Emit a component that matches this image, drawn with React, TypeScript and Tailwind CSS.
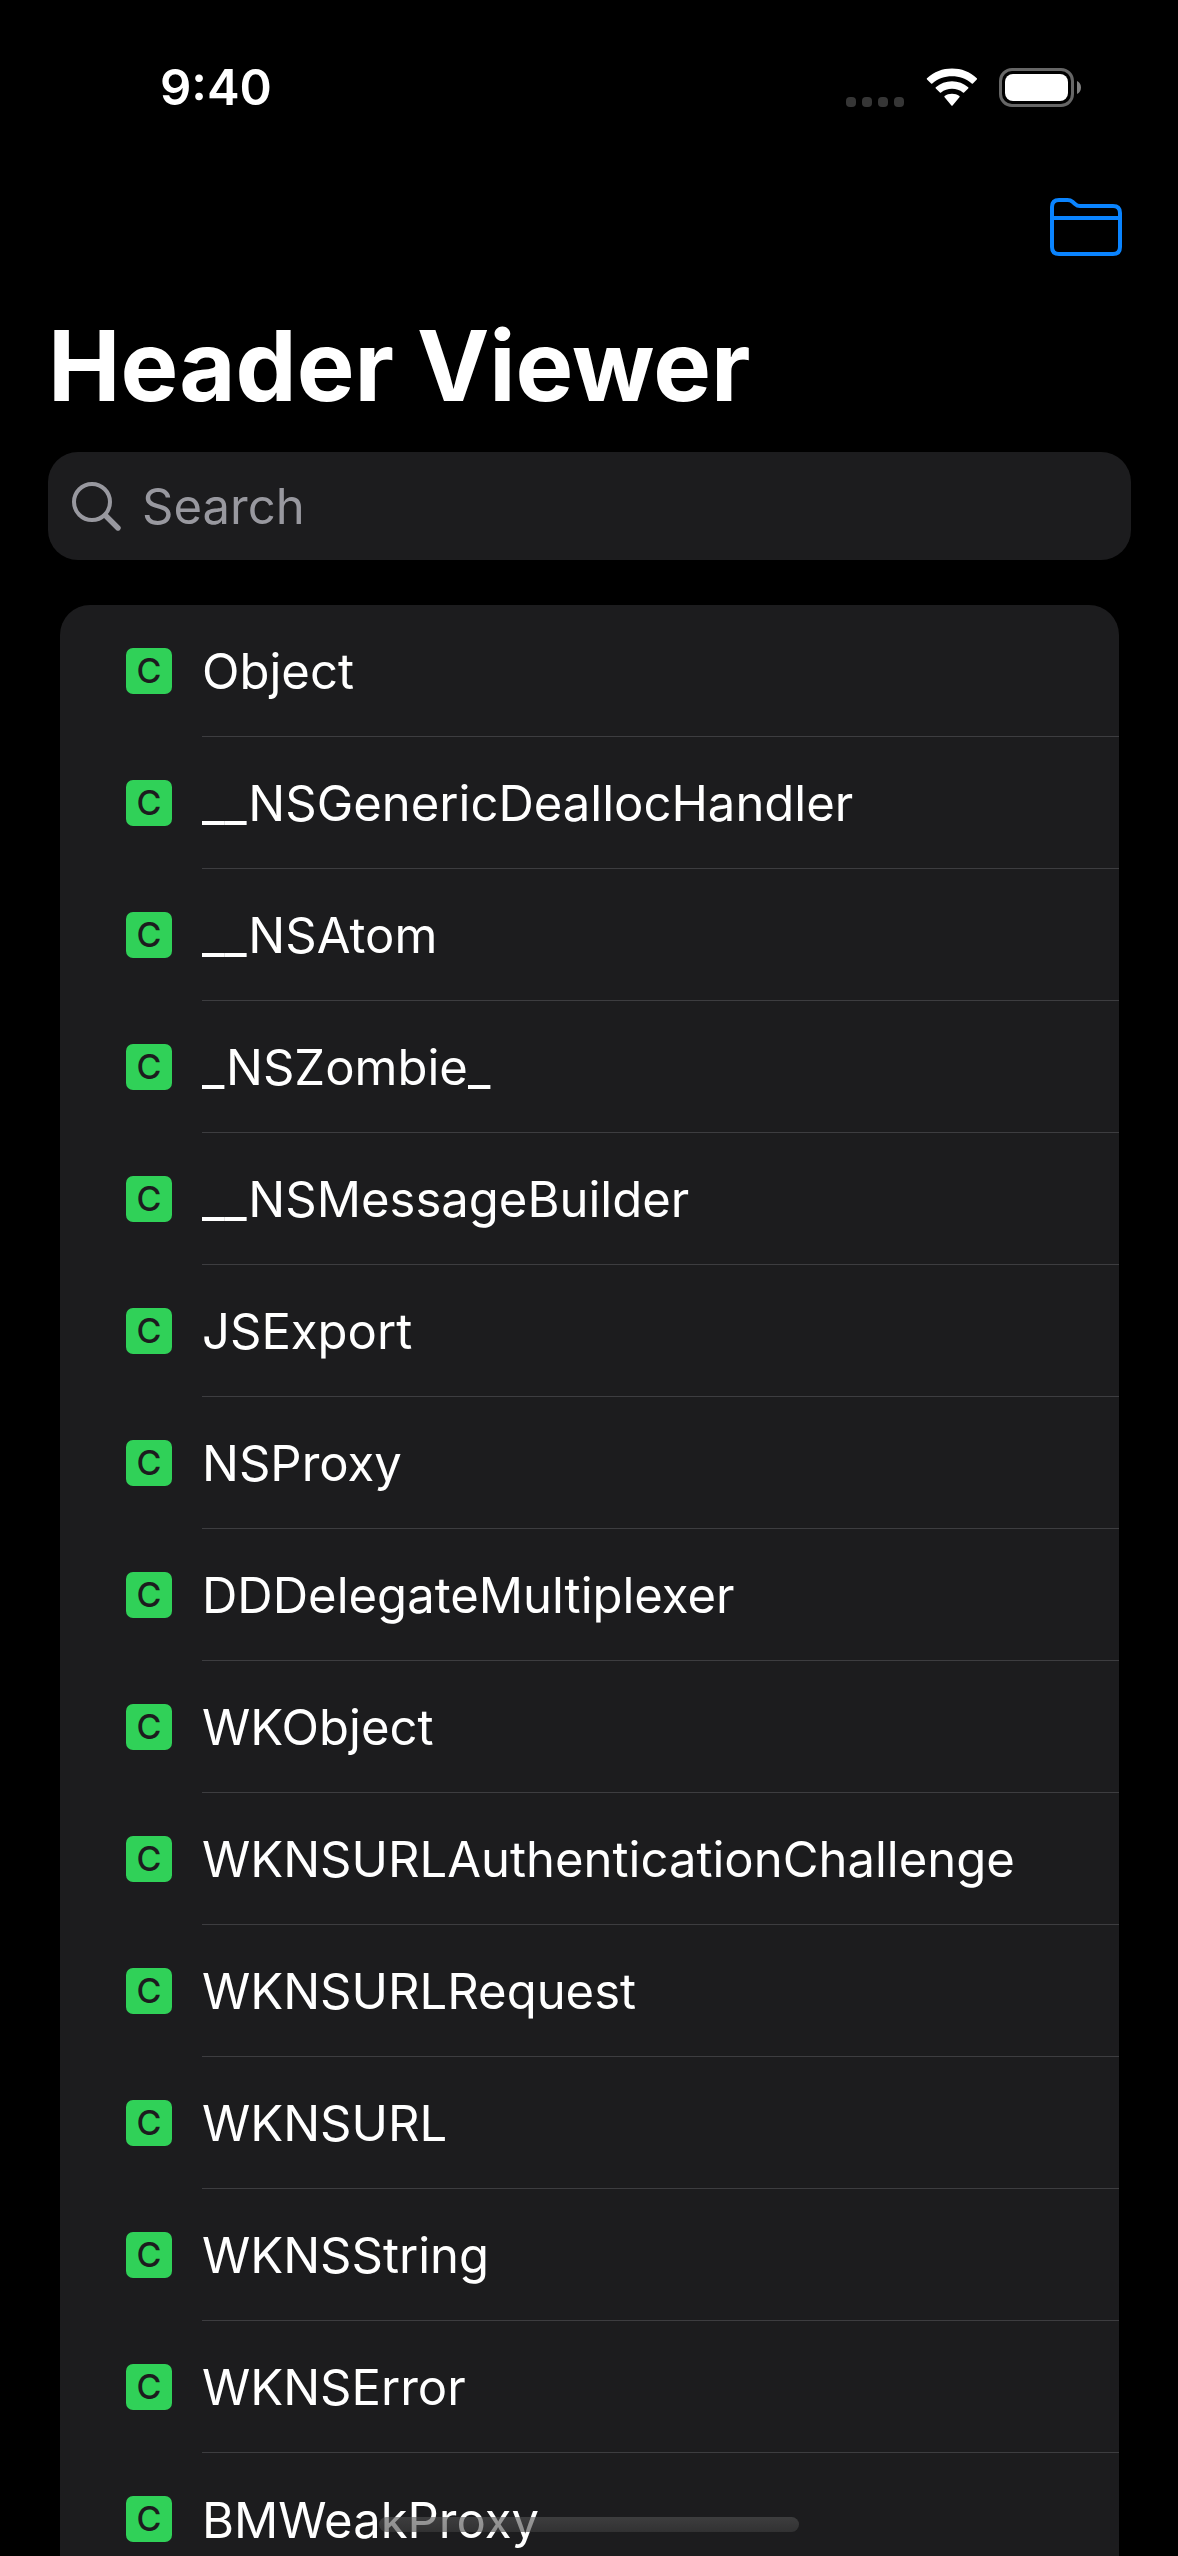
const classes = [
  "Object",
  "__NSGenericDeallocHandler",
  "__NSAtom",
  "_NSZombie_",
  "__NSMessageBuilder",
  "JSExport",
  "NSProxy",
  "DDDelegateMultiplexer",
  "WKObject",
  "WKNSURLAuthenticationChallenge",
  "WKNSURLRequest",
  "WKNSURL",
  "WKNSString",
  "WKNSError",
  "BMWeakProxy",
];

function WifiIcon() {
  return (
    <svg width="52" height="39" viewBox="0 0 52 39" fill="#fff" aria-label="Wi-Fi">
      <path d="M1 11.5Q0.4 10.9 1 10.3C8 3.8 16.6 0.6 26 0.6S44 3.8 50.8 10.3Q51.4 10.9 50.8 11.5L46.9 15.5Q46.3 16 45.7 15.5C40.2 10.6 33.4 8.2 26 8.2S11.8 10.6 6.3 15.5Q5.7 16 5.1 15.5Z" />
      <path d="M9.8 20.4Q9.2 19.8 9.8 19.2C14.4 15.2 19.9 13.2 26 13.2S37.6 15.2 42.2 19.2Q42.8 19.8 42.2 20.4L38.1 24.5Q37.5 25 36.9 24.5C33.8 22 30.2 20.8 26 20.8S18.2 22 15.1 24.5Q14.5 25 13.9 24.5Z" />
      <path d="M18.6 29.2Q18 28.6 18.6 28C20.7 26.5 23.2 25.7 26 25.7S31.3 26.5 33.4 28Q34 28.6 33.4 29.2L26.6 37.4Q26 38 25.4 37.4Z" />
    </svg>
  );
}

function BatteryIcon() {
  return (
    <svg width="84" height="39" viewBox="0 0 84 39" aria-label="Battery full">
      <rect x="1.5" y="1.5" width="72" height="36" rx="11.5" fill="none" stroke="#666" strokeWidth="3" />
      <rect x="6" y="6" width="63" height="27" rx="8" fill="#fff" />
      <path d="M78 13C80.4 14 82 16.5 82 19.5S80.4 25 78 26Z" fill="#808080" />
    </svg>
  );
}

function FolderIcon() {
  return (
    <svg width="72" height="58" viewBox="0 0 72 58" fill="none" stroke="#0a84ff" strokeWidth="4">
      <path d="M2 9Q2 2 9 2H17.5Q20.5 2 22.500 3.800L25 6Q27.2 8 30 8H63Q70 8 70 15V49Q70 56 63 56H9Q2 56 2 49Z" />
      <path d="M2 20H70" />
    </svg>
  );
}

function SearchIcon() {
  return (
    <svg width="51" height="51" viewBox="0 0 51 51" fill="none" stroke="#98989f" strokeLinecap="round">
      <circle cx="21" cy="21" r="18" strokeWidth="4" />
      <path d="M34.5 34.5L47 47" strokeWidth="5.4" />
    </svg>
  );
}

function StatusBar() {
  return (
    <header className="flex h-[175px] shrink-0 items-center justify-between pl-40 pr-[95px]">
      <time className="text-[49px] leading-none font-semibold">9:40</time>
      <div className="flex items-center">
        <div className="mt-7 mr-[22px] flex gap-1.5" aria-label="No signal">
          {[0, 1, 2, 3].map((dot) => (
            <span key={dot} className="size-2.5 rounded-[4px] bg-[#363636]" />
          ))}
        </div>
        <WifiIcon />
        <div className="ml-[21px]">
          <BatteryIcon />
        </div>
      </div>
    </header>
  );
}

function ClassRow({ name }: { name: string }) {
  return (
    <li className="group">
      <a href="#" className="flex h-[132px] items-center pl-[66px]">
        <span className="flex size-[46px] items-center justify-center rounded-[7px] bg-[#30d158] text-[34px] leading-none font-medium text-[#1c1c1e]">
          C
        </span>
        <span className="ml-[30px] flex h-full flex-1 items-center border-b border-[#3d3d40] pt-0.5 text-[49px] leading-none group-last:border-b-0">
          {name}
        </span>
      </a>
    </li>
  );
}

export default function App() {
  return (
    <div className="relative flex h-screen flex-col overflow-hidden bg-black font-['Inter',sans-serif] text-white">
      <StatusBar />
      <main className="flex min-h-0 flex-1 flex-col pr-[47px] pl-12">
        <div className="flex h-[103px] shrink-0 items-center justify-end pr-[9px]">
          <button type="button" aria-label="Open folder">
            <FolderIcon />
          </button>
        </div>
        <h1 className="flex h-[174px] shrink-0 items-center text-[97px] leading-none font-bold">Header Viewer</h1>
        <label className="flex h-[108px] shrink-0 items-center gap-5 rounded-[30px] bg-[#1c1c1e] pl-[23px]">
          <SearchIcon />
          <input
            type="search"
            placeholder="Search"
            aria-label="Search"
            className="min-w-0 flex-1 bg-transparent text-[49px] leading-none outline-none placeholder:text-[#98989f]"
          />
        </label>
        <div className="mx-3 mt-[45px] min-h-0 flex-1 overflow-y-auto rounded-t-[30px] bg-[#1c1c1e] [scrollbar-width:none]">
          <ul>
            {classes.map((name) => (
              <ClassRow key={name} name={name} />
            ))}
          </ul>
        </div>
      </main>
      <div className="absolute bottom-6 left-1/2 h-[15px] w-[420px] -translate-x-1/2 rounded-full bg-linear-to-b from-[#545454]/60 to-[#404040]/60" />
    </div>
  );
}
